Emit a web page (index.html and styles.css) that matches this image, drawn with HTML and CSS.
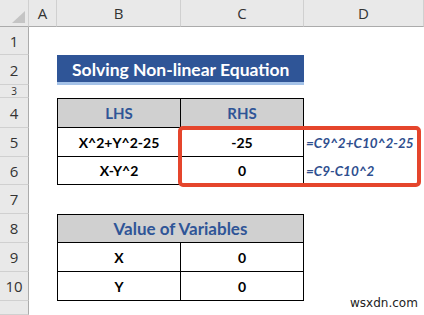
FILE: index.html
```html
<!DOCTYPE html>
<html>
<head>
<meta charset="utf-8">
<link rel="stylesheet" href="styles.css">
</head>
<body>
<div class="sheet">
  <div class="corner"><svg width="29" height="27" viewBox="0 0 29 27"><polygon points="25,11 25,23 12,23" fill="#c4c4c4"/></svg></div>
  <div class="colh">A</div>
  <div class="colh">B</div>
  <div class="colh">C</div>
  <div class="colh last">D</div>

  <div class="rowh r1">1</div>
  <div class="rowh r2">2</div>
  <div class="rowh r3 small">3</div>
  <div class="rowh r4">4</div>
  <div class="rowh r5">5</div>
  <div class="rowh r6">6</div>
  <div class="rowh r7">7</div>
  <div class="rowh r8">8</div>
  <div class="rowh r9">9</div>
  <div class="rowh r10">10</div>
  <div class="rowh r11"></div>

  <div class="title">Solving Non-linear Equation</div>

  <div class="cell head top left r4 cb">LHS</div>
  <div class="cell head top r4 cc">RHS</div>
  <div class="cell left r5 cb">X^2+Y^2-25</div>
  <div class="cell r5 cc">-25</div>
  <div class="formula r5">=C9^2+C10^2-25</div>
  <div class="cell left r6 cb">X-Y^2</div>
  <div class="cell r6 cc">0</div>
  <div class="formula r6">=C9-C10^2</div>

  <div class="cell head wide top left r8 span">Value of Variables</div>
  <div class="cell left r9 cb">X</div>
  <div class="cell r9 cc">0</div>
  <div class="cell left r10 cb">Y</div>
  <div class="cell r10 cc">0</div>

  <div class="highlight"></div>
  <div class="mark">wsxdn.com</div>
</div>
</body>
</html>
```
FILE: styles.css
```css
html, body {
  margin: 0;
  padding: 0;
  background: #ffffff;
}
.sheet {
  position: relative;
  width: 424px;
  height: 315px;
  overflow: hidden;
  display: grid;
  grid-template-columns: 29px 28px 124px 123px 1fr;
  grid-template-rows: 27px 28px 30px 13px 30px 29px 28px 29px 29px 29px 29px 1fr;
  font-family: Lato, "Liberation Sans", sans-serif;
}
.corner {
  grid-column: 1;
  grid-row: 1;
  background: #e9e9e9;
  border-right: 1px solid #d0d0d0;
  border-bottom: 1px solid #ababab;
  box-sizing: border-box;
}
.corner svg { display: block; }
.colh {
  grid-row: 1;
  background: #e9e9e9;
  border-right: 1px solid #d0d0d0;
  border-bottom: 1px solid #ababab;
  box-sizing: border-box;
  display: flex;
  align-items: center;
  justify-content: center;
  font-family: "Open Sans", "Noto Sans", sans-serif;
  font-size: 15px;
  color: #333;
}
.rowh {
  grid-column: 1;
  background: #e9e9e9;
  border-right: 1px solid #ababab;
  border-bottom: 1px solid #d0d0d0;
  box-sizing: border-box;
  display: flex;
  align-items: center;
  justify-content: center;
  font-family: "Open Sans", "Noto Sans", sans-serif;
  font-size: 15px;
  color: #333;
}
.rowh.small { font-size: 10px; line-height: 10px; }
.r1 { grid-row: 2; }
.r2 { grid-row: 3; }
.r3 { grid-row: 4; }
.r4 { grid-row: 5; }
.r5 { grid-row: 6; }
.r6 { grid-row: 7; }
.r7 { grid-row: 8; }
.r8 { grid-row: 9; }
.r9 { grid-row: 10; }
.r10 { grid-row: 11; }
.r11 { grid-row: 12; }
.cb { grid-column: 3; }
.cc { grid-column: 4; }
.span { grid-column: 3 / 5; }
.title {
  grid-column: 3 / 5;
  grid-row: 3;
  background: #2f5597;
  border-bottom: 3px solid #a4c2e8;
  box-sizing: border-box;
  color: #ffffff;
  font-weight: 700;
  font-size: 17.5px;
  display: flex;
  align-items: center;
  padding-left: 15px;
  padding-top: 1px;
}
.cell {
  box-sizing: border-box;
  border-right: 1px solid #000;
  border-bottom: 1px solid #000;
  display: flex;
  align-items: center;
  justify-content: center;
  font-weight: 700;
  font-size: 14px;
  color: #000;
}
.cell.top { border-top: 1px solid #000; }
.cell.left { border-left: 1px solid #000; }
.cell.head {
  background: #d0d0d0;
  color: #2f5597;
  font-size: 15px;
}
.cell.head.wide { font-size: 17px; }
.formula {
  grid-column: 5;
  display: flex;
  align-items: center;
  padding-left: 2px;
  font-style: italic;
  font-weight: 700;
  font-size: 13.5px;
  color: #2f4f8f;
  white-space: nowrap;
}
.highlight {
  position: absolute;
  left: 178px;
  top: 126px;
  width: 243px;
  height: 61px;
  box-sizing: border-box;
  border: 4px solid #e5452c;
  border-radius: 5px;
}
.mark {
  position: absolute;
  left: 350px;
  top: 296px;
  font-family: "DejaVu Sans", sans-serif;
  font-size: 12px;
  color: #222;
}
```
